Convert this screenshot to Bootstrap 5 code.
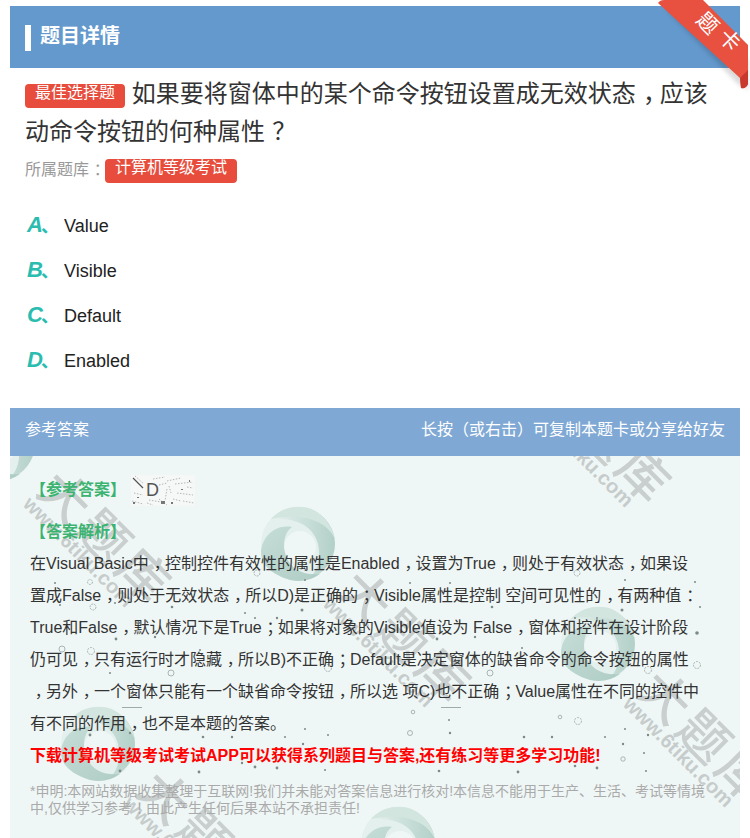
<!DOCTYPE html>
<html lang="zh-CN">
<head>
<meta charset="utf-8">
<title>题目详情</title>
<link rel="stylesheet" href="https://cdn.jsdelivr.net/npm/bootstrap@5.3.0/dist/css/bootstrap.min.css">
<style>
html,body{height:100%;overflow:hidden}
body{background:#fff;font-family:"Liberation Sans","Noto Sans CJK SC",sans-serif;color:#222}
.sheet{margin:6px 10px 0;position:relative}
.title-bar{background:#6499cd;height:62px;padding-left:15px;color:#fff;font-size:20px;font-weight:700}
.title-mark{width:6px;height:26px;background:#fff;margin-right:9px;margin-top:2px}
.title-text{margin-top:-3px}
.ribbon{position:absolute;left:630px;top:-6px;width:110px;height:100px;overflow:visible}
.quest{padding:7px 15px 0;font-size:24px;line-height:38px;color:#333}
.tag-red{display:inline-block;background:#e74c3c;color:#fff;font-size:16px;line-height:18px;height:24px;padding:0 10px;border-radius:4px;vertical-align:4px}
.bank{padding:3px 15px 0;height:35px;font-size:16px;line-height:32px;color:#999}
.bank .tag-red{vertical-align:2px}
.opts{margin:18px 0 24px;padding:0 0 0 17px}
.opts li{height:45px;font-size:18px;color:#222}
.opt-key{width:37px;color:#2bbcb0;font-size:22px;line-height:22px;font-weight:700;font-style:italic;white-space:nowrap;margin-top:-3px}
.opt-key i{font-style:normal;font-size:18px;margin-left:-2px}
.ans-bar{background:#7fa9d4;height:48px;padding:0 15px 4px;color:#fff;font-size:16px}
.ans-body{background:#eff7f6;position:relative;height:382px;overflow:hidden;padding:18px 20px 0}
.paper{position:absolute;left:0;top:0;width:730px;height:382px}
.ans-body>div{position:relative}
.ans-head{color:#3cb371;font-weight:700;font-size:16px;line-height:32px}
.ans-head-a{height:42px}
.noise{width:64px;height:31px;margin-left:5px;font-weight:400}
.ans-head-a .noise{margin-top:1px}
.expl{font-size:16px;line-height:32px;color:#333;white-space:nowrap;height:192px}
.promo{font-size:16px;line-height:32px;color:#f00;font-weight:700;white-space:nowrap;height:32px}
.legal{font-size:14px;line-height:17px;color:#aaa;margin-top:11px;white-space:nowrap}
.wm{fill:#c9cfce;font-family:"Noto Sans CJK SC",sans-serif;font-weight:500;font-size:50px}
.wm2{fill:#c6cccb;font-family:"Liberation Sans",sans-serif;font-weight:700;font-size:20px}
.pn{display:inline-block;width:1em;transform:translateX(.3em)}
</style>
</head>
<body>
<div class="sheet">
  <div class="title-bar d-flex align-items-center"><span class="title-mark"></span><span class="title-text">题目详情</span></div>
  <svg class="ribbon" viewBox="640 0 110 100" aria-hidden="true">
    <defs><filter id="rs" x="-20%" y="-20%" width="140%" height="140%"><feGaussianBlur stdDeviation="2"/></filter></defs>
    <path d="M664 8L738 84L748 90L748 60Z" fill="#000" opacity=".14" filter="url(#rs)"/>
    <path d="M658 3Q660 0 664 0L703 0L748 45L748 84Q746 89 741 88L740 78L658 3Z" fill="#e8503f"/>
    <path d="M740 78L748 70L748 84Q746 89 741 88Z" fill="#c9382c"/>
    <text x="0" y="0" transform="translate(695,21) rotate(45)" fill="#fff" font-size="21" font-family="Noto Sans CJK SC, sans-serif">题</text>
    <text x="0" y="0" transform="translate(717,38) rotate(45)" fill="#fff" font-size="21" font-family="Noto Sans CJK SC, sans-serif">卡</text>
  </svg>
  <div class="quest"><span class="tag-red">最佳选择题</span> 如果要将窗体中的某个命令按钮设置成无效状态<span class="pn">，</span>应该动命令按钮的何种属性<span class="pn">？</span></div>
  <div class="bank">所属题库<span class="pn">：</span><span class="tag-red">计算机等级考试</span></div>
  <ul class="opts list-unstyled">
    <li class="d-flex align-items-center"><span class="opt-key">A<i>、</i></span><span>Value</span></li>
    <li class="d-flex align-items-center"><span class="opt-key">B<i>、</i></span><span>Visible</span></li>
    <li class="d-flex align-items-center"><span class="opt-key">C<i>、</i></span><span>Default</span></li>
    <li class="d-flex align-items-center"><span class="opt-key">D<i>、</i></span><span>Enabled</span></li>
  </ul>
  <div class="ans-bar d-flex justify-content-between align-items-center"><span>参考答案</span><span>长按（或右击）可复制本题卡或分享给好友</span></div>
  <div class="ans-body">
    <svg class="paper" viewBox="10 456 730 382" aria-hidden="true">
      <defs>
        <linearGradient id="g2" x1="0" y1="0" x2="1" y2="1"><stop offset="0" stop-color="#c2dbd4"/><stop offset="1" stop-color="#a9c9c1"/></linearGradient>
        <linearGradient id="g3" x1="0" y1="0" x2="1" y2="0"><stop offset="0" stop-color="#e6f1ee"/><stop offset="1" stop-color="#b2d0c8"/></linearGradient>
        <g id="swirl">
          <path d="M0-37A37 37 0 1 1 0 37A37 37 0 1 1 0-37ZM2-13A16 16 0 1 0 2 19A16 16 0 1 0 2-13Z" fill="#e4f0ed" fill-rule="evenodd"/>
          <path d="M-27-25A37 37 0 0 1 37 0A37 37 0 0 1 10 35C20 28 23 14 20 0C14-22-8-26-27-25Z" fill="url(#g3)"/>
          <path d="M-37 8C-36-8-22-20-6-17C-14-12-16 2-12 12C-8 24 4 32 22 30A37 37 0 0 1-8 36C-26 30-37 22-37 8Z" fill="url(#g2)" opacity=".9"/>
          <path d="M-27-25A37 37 0 0 1 5-37C20-36 33-22 37-5C26-28-3-30-27-25Z" fill="#d3e5df"/>
        </g>
        <g id="mark">
          <text class="wm" x="0" y="-18" transform="rotate(45)" textLength="160">大题库</text>
          <text class="wm2" x="0" y="0" transform="rotate(45)" textLength="146">www.6tiku.com</text>
        </g>
      </defs>
      <use href="#swirl" x="-2" y="444"/>
      <use href="#swirl" x="298" y="544"/>
      <use href="#swirl" x="598" y="644"/>
      <use href="#swirl" x="98" y="744"/>
      <use href="#swirl" x="398" y="844"/>
      <use href="#mark" x="22" y="505"/>
      <use href="#mark" x="322" y="605"/>
      <use href="#mark" x="622" y="705"/>
      <use href="#mark" x="522" y="405"/>
      <use href="#mark" x="122" y="805"/>
      <g fill="#7c8a88">
        <circle cx="116" cy="639" r="1.4"/><circle cx="155" cy="637" r="1.2"/><circle cx="200" cy="650" r="1"/><circle cx="110" cy="673" r="1"/>
        <circle cx="130" cy="733" r="1.2"/><circle cx="90" cy="735" r="1.4"/><circle cx="203" cy="737" r="1.3"/><circle cx="232" cy="737" r="1.2"/><circle cx="285" cy="737" r="1"/><circle cx="305" cy="729" r="1"/><circle cx="328" cy="735" r="1"/><circle cx="303" cy="744" r="1.2"/>
        <circle cx="242" cy="763" r="1.2"/><circle cx="255" cy="767" r="1.4"/><circle cx="277" cy="768" r="1.4"/><circle cx="325" cy="770" r="1"/><circle cx="120" cy="771" r="1.4"/><circle cx="199" cy="772" r="1.4"/>
        <circle cx="449" cy="720" r="1"/><circle cx="450" cy="733" r="1.2"/><circle cx="524" cy="737" r="1.3"/><circle cx="552" cy="737" r="1.2"/><circle cx="605" cy="737" r="1"/><circle cx="625" cy="729" r="1"/><circle cx="648" cy="735" r="1.2"/><circle cx="623" cy="744" r="1.2"/>
        <circle cx="575" cy="766" r="1.3"/><circle cx="597" cy="768" r="1.4"/><circle cx="644" cy="753" r="1"/><circle cx="646" cy="771" r="1"/><circle cx="439" cy="771" r="1.3"/><circle cx="518" cy="772" r="1.4"/>
        <circle cx="437" cy="639" r="1.4"/><circle cx="475" cy="637" r="1.2"/><circle cx="697" cy="633" r="1.8"/><circle cx="522" cy="648" r="1"/>
        <circle cx="55" cy="583" r="1"/><circle cx="60" cy="605" r="1"/><circle cx="172" cy="607" r="1.3"/><circle cx="115" cy="603" r="1"/><circle cx="305" cy="580" r="1"/><circle cx="245" cy="613" r="1"/><circle cx="277" cy="618" r="1.2"/><circle cx="255" cy="618" r="1"/><circle cx="302" cy="610" r="1.5"/>
        <circle cx="410" cy="583" r="1"/><circle cx="450" cy="583" r="1"/><circle cx="492" cy="607" r="1.3"/><circle cx="522" cy="603" r="1"/><circle cx="625" cy="580" r="1"/><circle cx="695" cy="582" r="1"/><circle cx="622" cy="610" r="1.5"/><circle cx="575" cy="618" r="1"/><circle cx="597" cy="618" r="1"/><circle cx="700" cy="607" r="1"/>
        <rect x="122" y="707" width="20" height=".7"/><rect x="441" y="707" width="20" height=".7"/>
      </g>
      <g fill="none" stroke="#8d9a98" stroke-width=".7">
        <circle cx="62" cy="649" r="3"/><circle cx="91" cy="651" r="3.5" stroke-dasharray="2 1"/><circle cx="171" cy="673" r="3"/><circle cx="328" cy="668" r="3.5" stroke-dasharray="2 1"/>
        <circle cx="413" cy="712" r="1.8"/><circle cx="560" cy="717" r="1.8"/><circle cx="578" cy="721" r="3.5" stroke-dasharray="2 1"/><circle cx="410" cy="733" r="2.5"/>
        <circle cx="623" cy="759" r="2.2"/><circle cx="697" cy="665" r="3.5" stroke-dasharray="2 1"/><circle cx="490" cy="673" r="3"/><circle cx="648" cy="670" r="3.5" stroke-dasharray="2 1"/>
        <circle cx="90" cy="582" r="2.5" stroke-dasharray="2 1"/><circle cx="93" cy="607" r="3" stroke-dasharray="2 1"/><circle cx="257" cy="573" r="3" stroke-dasharray="2 1"/><circle cx="577" cy="573" r="3" stroke-dasharray="2 1"/>
      </g>
    </svg>
    <div class="ans-head ans-head-a d-flex align-items-start"><span>【参考答案】</span>
      <svg class="noise" viewBox="0 0 64 31" aria-hidden="true">
        <rect width="64" height="31" fill="#f6f8f8"/>
        <path d="M4 1L13 9M22 4L34 2M36 6L50 3M44 9L62 7M28 10L36 8M3 18L12 20M1 26L12 29M18 25L30 27M36 14L34 26M38 11L40 18M46 18L62 20M52 26L63 28M42 24L50 26M56 12L62 13M16 28L22 30M28 24L36 30" stroke="#999" stroke-width=".7" stroke-dasharray="1.5 1.5" fill="none"/>
        <path d="M2 3L12 13" stroke="#555" stroke-width="1.2"/>
        <path d="M30 26h4v3h-4zM2 27h2v2h-2zM58 5h1v2h-1zM50 14h2v1h-2zM6 22h2v1h-2zM40 27h2v2h-2z" fill="#777"/>
        <text x="15" y="21" font-size="18" font-weight="400" fill="#555" font-family="Liberation Sans, sans-serif">D</text>
      </svg>
    </div>
    <div class="ans-head">【答案解析】</div>
    <div class="expl">在Visual Basic中<span class="pn">，</span>控制控件有效性的属性是Enabled<span class="pn">，</span>设置为True<span class="pn">，</span>则处于有效状态<span class="pn">，</span>如果设<br>置成False<span class="pn">，</span>则处于无效状态<span class="pn">，</span>所以D)是正确的<span class="pn">；</span>Visible属性是控制 空间可见性的<span class="pn">，</span>有两种值<span class="pn">：</span><br>True和False<span class="pn">，</span>默认情况下是True<span class="pn">；</span>如果将对象的Visible值设为 False<span class="pn">，</span>窗体和控件在设计阶段<br>仍可见<span class="pn">，</span>只有运行时才隐藏<span class="pn">，</span>所以B)不正确<span class="pn">；</span>Default是决定窗体的缺省命令的命令按钮的属性<br><span class="pn">，</span>另外<span class="pn">，</span>一个窗体只能有一个缺省命令按钮<span class="pn">，</span>所以选 项C)也不正确<span class="pn">；</span>Value属性在不同的控件中<br>有不同的作用<span class="pn">，</span>也不是本题的答案。</div>
    <div class="promo">下载计算机等级考试考试APP可以获得系列题目与答案,还有练习等更多学习功能!</div>
    <div class="legal">*申明:本网站数据收集整理于互联网!我们并未能对答案信息进行核对!本信息不能用于生产、生活、考试等情境<br>中,仅供学习参考<span class="pn">！</span>由此产生任何后果本站不承担责任!</div>
  </div>
</div>
<script src="https://cdn.jsdelivr.net/npm/bootstrap@5.3.0/dist/js/bootstrap.bundle.min.js"></script>
</body>
</html>
